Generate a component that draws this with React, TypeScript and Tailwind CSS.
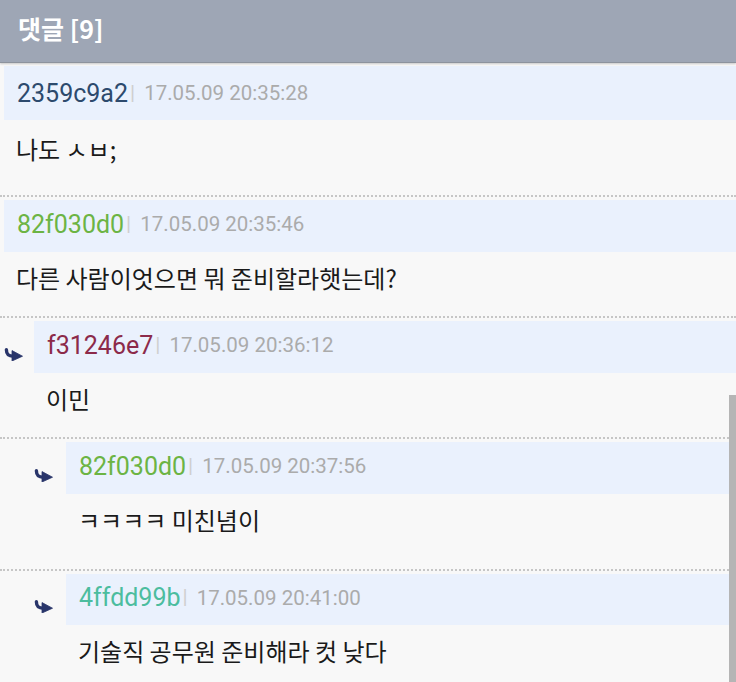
const comments = [
  { id: '2359c9a2', time: '17.05.09 20:35:28', text: '나도 ㅅㅂ;', color: 'text-[#2d4a6d]', level: 0, barH: 'h-[54px]', barPad: 'pt-[1px]', bodyH: 'h-[75px] pt-[14px]' },
  { id: '82f030d0', time: '17.05.09 20:35:46', text: '다른 사람이엇으면 뭐 준비할라햇는데?', color: 'text-[#6cb444]', level: 0, barH: 'h-[52px]', barPad: 'pb-[3px]', bodyH: 'h-[64px] pt-[11px]' },
  { id: 'f31246e7', time: '17.05.09 20:36:12', text: '이민', color: 'text-[#8c2a4a]', level: 1, barH: 'h-[52px]', barPad: 'pb-[3px]', bodyH: 'h-[64px] pt-[11px]' },
  { id: '82f030d0', time: '17.05.09 20:37:56', text: 'ㅋㅋㅋㅋ 미친념이', color: 'text-[#6cb444]', level: 2, barH: 'h-[52px]', barPad: 'pb-[3px]', bodyH: 'h-[75px] pt-[11px]' },
  { id: '4ffdd99b', time: '17.05.09 20:41:00', text: '기술직 공무원 준비해라 컷 낮다', color: 'text-[#4cbd9f]', level: 2, barH: 'h-[51px]', barPad: 'pb-[3px]', bodyH: 'h-[66px] pt-[11px]' },
];

// left gutter width per reply depth
const indent = ['w-[4px]', 'w-[34px] pr-[11px]', 'w-[66px] pr-[13px]'];
const bodyPad = ['pl-[16px]', 'pl-[46px]', 'pl-[78px]'];

const ReplyArrow = () => (
  <svg width="19" height="13" viewBox="0 0 19 13" className="mt-[14px]">
    <path d="M2.4 1.8 C2.4 6.5 4.5 8.2 9.5 8.2" fill="none" stroke="#29356a" strokeWidth="3.4" strokeLinecap="round" />
    <path d="M8 2.6 L18.5 8.2 L8 13 Z" fill="#29356a" strokeLinejoin="round" stroke="#29356a" strokeWidth="0.8" />
  </svg>
);

export default function App() {
  return (
    <div className="relative min-h-[682px] w-[736px] overflow-hidden bg-[#f8f8f8] font-['Roboto','Noto_Sans_CJK_KR',sans-serif]">
      <div className="flex h-[63px] items-center border-b border-[#8d939d] bg-[#9ea6b5] pl-[18px] shadow-[0_1px_2px_rgba(0,0,0,0.2)]">
        <span className="pb-[4px] font-['Noto_Sans_CJK_KR',sans-serif] text-[25px] font-bold text-white">댓글 [9]</span>
      </div>

      {comments.map((c, i) => (
        <div key={i} className="border-b-2 border-dotted border-[#c6c6c6] pt-[3px]">
          <div className={`flex ${c.barH}`}>
            <div className={`flex shrink-0 items-center justify-end ${indent[c.level]}`}>
              {c.level > 0 && <ReplyArrow />}
            </div>
            <div className={`flex flex-1 items-center bg-[#eaf1fd] pl-[13px] ${c.barPad}`}>
              <span className={`text-[25px] ${c.color}`}>{c.id}</span>
              <span className="ml-[2px] text-[21px] text-[#cfcfcf]">|</span>
              <span className="ml-[9px] text-[20.5px] text-[#ababab]">{c.time}</span>
            </div>
          </div>
          <div className={`${c.bodyH} ${bodyPad[c.level]}`}>
            <p className="font-['Noto_Sans_CJK_KR',sans-serif] text-[24px] leading-[30px] text-[#1a1a1a]">{c.text}</p>
          </div>
        </div>
      ))}

      <div className="absolute bottom-0 right-0 top-[395px] w-[7px] bg-[#b5b5b5]" />
    </div>
  );
}
